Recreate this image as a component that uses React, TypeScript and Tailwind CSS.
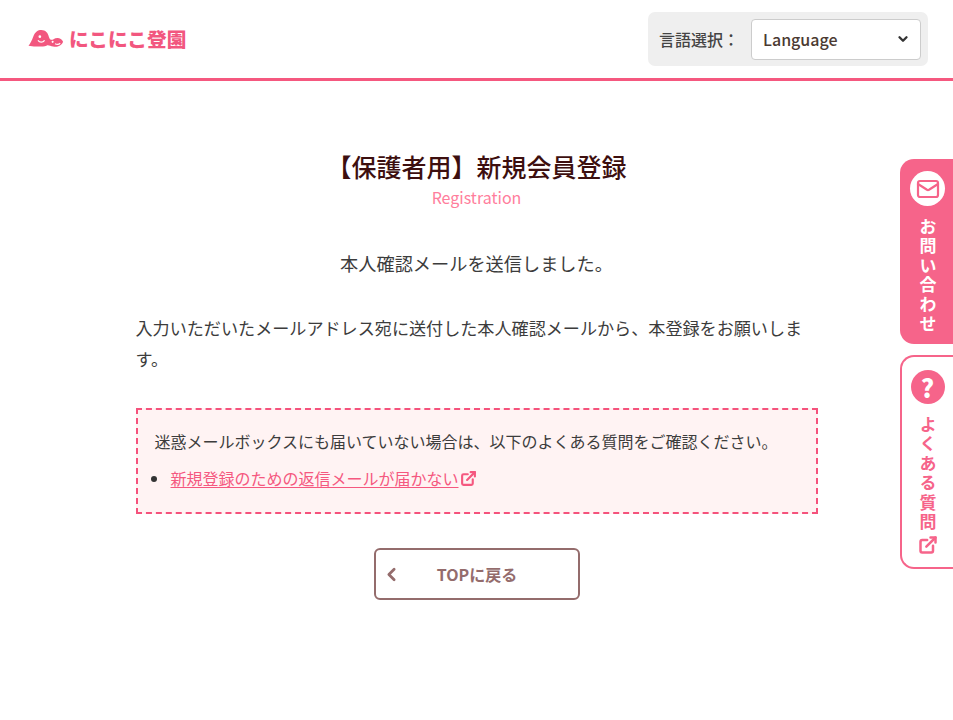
import React from 'react';
import { ChevronDown, ChevronLeft, ExternalLink, Mail } from 'lucide-react';

const cjk = "font-['Noto_Sans_CJK_JP','Noto_Sans',sans-serif]";

// ロゴのキャラクター
const Mascot = () => (
  <svg width="36" height="18" viewBox="0 0 37 19" className="shrink-0">
    <path
      d="M0 16.5 C2 14 3.5 11 5 7 C7 2 10 0 13.5 0 C18 0 20.5 3 21.5 7 C22.5 10 24 11 26 10 C30 7.5 34.5 8 36.5 12.5 C35 17 30 18.5 26 17.5 C23 17 21 15.5 19 16.5 C14 18 7 17.5 0 16.5 Z"
      fill="#f2577f"
    />
    <circle cx="12" cy="7" r="1.4" fill="#fff" />
    <path d="M10 11 C12 13.5 15 13.5 17 11" stroke="#fff" strokeWidth="1.4" fill="none" />
    <circle cx="25.5" cy="12.5" r="1.1" fill="#fff" />
    <path d="M28 14.5 C30 15.5 32 15.5 33.5 14" stroke="#fff" strokeWidth="1.2" fill="none" />
  </svg>
);

const VerticalText = ({ children }: { children: string }) => (
  <span className="text-[17px] leading-[24px] tracking-[2.4px] [writing-mode:vertical-rl]">{children}</span>
);

export default function App() {
  return (
    <div className={`relative min-h-[720px] overflow-hidden bg-white text-[#333] ${cjk}`}>
      {/* ヘッダー */}
      <header className="flex h-[81px] items-center justify-between border-b-[3px] border-[#f5587f] pr-[25px] pl-[28px]">
        <div className="flex items-center gap-[5px] text-[19.7px] leading-none font-black text-[#f2577f]">
          <Mascot />
          <span>にこにこ登園</span>
        </div>
        <div className="flex h-[54px] w-[280px] items-center rounded-[7px] bg-[#efefef] pr-[7px] pl-[11px]">
          <span className="w-[92px] text-[16px] font-medium text-[#444]">言語選択：</span>
          <div className="flex h-[41px] flex-1 items-center justify-between rounded-[4px] border border-[#ccc] bg-white pr-[10px] pl-[11px]">
            <span className="text-[16px] font-medium text-[#4b3a32]">Language</span>
            <ChevronDown size={14} strokeWidth={4} className="text-[#333]" />
          </div>
        </div>
      </header>

      {/* 本文 */}
      <main className="mx-auto flex w-[682px] flex-col items-center pt-[66px]">
        <h1 className="h-[38px] text-[25px] leading-[38px] font-medium text-[#3d0f0f]">【保護者用】新規会員登録</h1>
        <p className="text-[16px] leading-[24px] text-[#ff7d9c]">Registration</p>
        <p className="mt-[38px] text-[18.2px] leading-[32px] text-[#3c3c3c]">本人確認メールを送信しました。</p>
        <p className="mt-[33px] w-full text-[17.1px] leading-[31px] text-[#3c3c3c]">
          入力いただいたメールアドレス宛に送付した本人確認メールから、本登録をお願いします。
        </p>
        <div className="mt-[34px] h-[106px] w-full border-2 border-dashed border-[#f5527c] bg-[#fff3f3] pt-[18px] pl-[17px]">
          <p className="text-[16px] leading-[27px] text-[#3c3c3c]">
            迷惑メールボックスにも届いていない場合は、以下のよくある質問をご確認ください。
          </p>
          <ul className="mt-[10px] flex items-center">
            <li className="flex items-center">
              <span className="-ml-[4px] h-[6px] w-[6px] rounded-full bg-[#333]" />
              <a className="ml-[14px] text-[16px] leading-[27px] text-[#f5587f] underline underline-offset-2">
                新規登録のための返信メールが届かない
              </a>
              <ExternalLink size={17} strokeWidth={3} className="ml-[1px] text-[#f5587f]" />
            </li>
          </ul>
        </div>
        <a className="relative mt-[34px] flex h-[52px] w-[206px] items-center justify-center rounded-[6px] border-2 border-[#946c6c] bg-white text-[16px] font-bold text-[#946c6c]">
          <ChevronLeft size={21} strokeWidth={3.2} className="absolute left-[5px]" />
          <span className="pl-[1px]">TOPに戻る</span>
        </a>
      </main>

      {/* 右側の固定タブ */}
      <div className="absolute top-[159px] right-0 flex w-[53px] flex-col gap-[11px]">
        <a className="flex h-[185px] flex-col items-center rounded-l-[14px] bg-[#f6648a] pt-[12px] pl-[2px] font-bold text-white">
          <span className="flex h-[35px] w-[35px] items-center justify-center rounded-full bg-white">
            <Mail size={24} strokeWidth={2.2} stroke="#f6648a" />
          </span>
          <div className="mt-[12px] flex">
            <VerticalText>お問い合わせ</VerticalText>
          </div>
        </a>
        <a className="flex h-[214px] flex-col items-center rounded-l-[14px] border-2 border-r-0 border-[#f6648a] bg-white pt-[13px] font-bold text-[#f6648a]">
          <span className="flex h-[34px] w-[34px] items-center justify-center rounded-full bg-[#f6648a] text-[25px] leading-none font-black text-white">
            ?
          </span>
          <div className="mt-[12px] flex">
            <VerticalText>よくある質問</VerticalText>
          </div>
          <ExternalLink size={20} strokeWidth={3} className="mt-[3px]" />
        </a>
      </div>
    </div>
  );
}
